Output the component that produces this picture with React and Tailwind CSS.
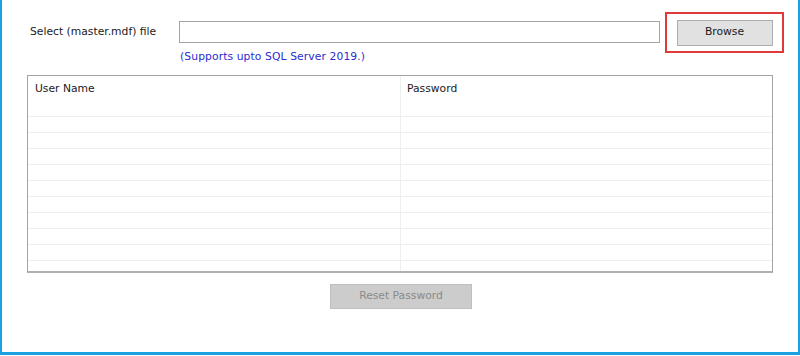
import React from 'react';

const rows = Array.from({ length: 9 });

const App = () => {
  return (
    <div
      className="w-[800px] h-[355px] box-border bg-white border-x-2 border-b-[3px] border-[#1ba1e2] flex flex-col text-[#1a1a1a] text-[10.75px]"
      style={{ fontFamily: '"DejaVu Sans", Verdana, sans-serif' }}
    >
      {/* file picker row */}
      <div className="flex items-start pt-[21px]">
        <div className="w-[177px] shrink-0 pl-[28px] h-[22px] leading-[22px]">Select (master.mdf) file</div>
        <div className="w-[481px] shrink-0 flex flex-col">
          <input
            type="text"
            className="h-[22px] w-full box-border border border-[#a5a5a5] bg-white outline-none px-1"
          />
          <div className="mt-[7px] pl-[1px] leading-[13px] text-[#2b2bd0] tracking-[0.1px]">(Supports upto SQL Server 2019.)</div>
        </div>
        <div className="ml-[5px] -mt-[9px] w-[119px] h-[41px] box-border border-2 border-[#e0393a] flex items-center justify-center">
          <button className="w-[96px] h-[26px] box-border border border-[#adadad] bg-[#e1e1e1] text-[#1a1a1a] leading-none">
            Browse
          </button>
        </div>
      </div>

      {/* user list */}
      <div className="ml-[25px] mt-[12px] w-[746px] h-[198px] box-border border border-[#a3a3a3] border-b-2 border-b-[#b0b0b0] flex flex-col">
        <div className="h-[41px] box-border border-b border-[#efefef] flex">
          <div className="w-[373px] box-border border-r border-[#eeeeee] pl-[7px] pt-[5px]">User Name</div>
          <div className="flex-1 pl-[6px] pt-[5px]">Password</div>
        </div>
        {rows.map((_, i) => (
          <div key={i} className="h-[16px] box-border border-b border-[#efefef] flex">
            <div className="w-[373px] box-border border-r border-[#eeeeee]" />
            <div className="flex-1" />
          </div>
        ))}
        <div className="flex-1 flex">
          <div className="w-[373px] box-border border-r border-[#eeeeee]" />
          <div className="flex-1" />
        </div>
      </div>

      <div className="flex justify-center mt-[11px] pl-[2px]">
        <button
          disabled
          className="w-[142px] h-[25px] box-border border border-[#bfbfbf] bg-[#cccccc] text-[#8a8a8a] leading-none"
        >
          Reset Password
        </button>
      </div>
    </div>
  );
};

export default App;
